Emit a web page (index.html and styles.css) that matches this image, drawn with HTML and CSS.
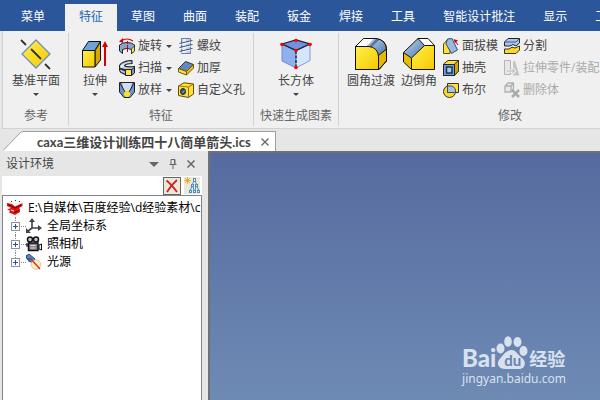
FILE: index.html
```html
<!DOCTYPE html>
<html lang="zh-CN">
<head>
  <meta charset="UTF-8">
  <title>CAXA 3D</title>
  <meta name="viewport" content="width=device-width, initial-scale=1.0">
  <link rel="stylesheet" href="styles.css">
</head>
<body>
  <svg class="defs" width="0" height="0" aria-hidden="true">
    <defs>
      <linearGradient id="gold" x1="0" y1="0" x2="1" y2="1">
        <stop offset="0" stop-color="#fff04a"/>
        <stop offset="1" stop-color="#f5c800"/>
      </linearGradient>
      <linearGradient id="steel" x1="0" y1="0" x2="1" y2="1">
        <stop offset="0" stop-color="#c3d9f0"/>
        <stop offset="1" stop-color="#4a76ab"/>
      </linearGradient>
    </defs>
  </svg>

  <!-- Menu -->
  <nav class="menu">
    <button class="menu-tab first">菜单</button>
    <button class="menu-tab active">特征</button>
    <button class="menu-tab">草图</button>
    <button class="menu-tab">曲面</button>
    <button class="menu-tab">装配</button>
    <button class="menu-tab">钣金</button>
    <button class="menu-tab">焊接</button>
    <button class="menu-tab">工具</button>
    <button class="menu-tab">智能设计批注</button>
    <button class="menu-tab">显示</button>
    <button class="menu-tab">工程</button>
  </nav>

  <!-- Ribbon -->
  <div class="ribbon">
    <section class="group">
      <div class="group-body">
        <button class="big">
          <svg width="32" height="32" viewBox="0 0 32 32">
            <path d="M16 2L30 16L16 30L2 16Z" fill="url(#gold)" stroke="#6f8fc4" stroke-width="1.3"/>
            <path d="M1 2L6 7M11 11L21 21M25 26L30 31" stroke="#333" stroke-width="1.8"/>
          </svg>
          <span>基准平面</span>
          <i class="arrow"></i>
        </button>
      </div>
      <div class="group-name">参考</div>
    </section>

    <section class="group">
      <div class="group-body">
        <button class="big">
          <svg width="32" height="32" viewBox="0 0 32 32">
            <path d="M3.5 12.5L9.5 3.5H21.5L16 12.5Z" fill="#6fa3d8" stroke="#111"/>
            <path d="M16 12.5L21.5 3.5V22L16 29Z" fill="#d9a800" stroke="#111"/>
            <path d="M3.5 12.5H16V29H3.5Z" fill="url(#gold)" stroke="#111"/>
            <path d="M26 28V8" stroke="#d40000" stroke-width="2"/>
            <path d="M23 9L26 3L29 9Z" fill="#d40000"/>
          </svg>
          <span>拉伸</span>
          <i class="arrow"></i>
        </button>
        <div class="column">
          <button class="small">
            <svg width="16" height="16" viewBox="0 0 16 16">
              <path d="M.5 7Q3 4.500 8 4.500T15.500 7V13L12.500 15.500V11.500Q8 9 3.500 11.500V15.500L.5 13Z" fill="#86a6cf" stroke="#222"/>
              <path d="M12.500 11L15.500 8V13L12.500 15.500Z" fill="#ffe34a" stroke="#222" stroke-width=".7"/>
              <path d="M2 3Q8-1 14 3" fill="none" stroke="#d40000" stroke-width="1.200"/>
              <path d="M8.500 3V15" stroke="#d40000" stroke-dasharray="3 1"/>
              <path d="M0 3.500L4 0V5Z" fill="#d40000"/>
            </svg>
            <span>旋转</span><i class="arrow"></i>
          </button>
          <button class="small">
            <svg width="16" height="16" viewBox="0 0 16 16">
              <path d="M13 .5Q3 1 .5 5.500Q0 9 4 10L6.500 11V14.500L2 12.500Q0 11 .5 6M13 .5V3.500Q7 3.500 5.500 5.500Q7 7.500 15.500 6.500V9L12.500 10H6.500L2 8.500" fill="#b7cbe5" stroke="#222" stroke-width="1.200"/>
              <path d="M6.500 9.500H12.500V15.500H6.500Z" fill="#ffe34a" stroke="#222"/>
              <path d="M12.500 9.500L15.500 7.500V13L12.500 15.500Z" fill="#7597c5" stroke="#222"/>
            </svg>
            <span>扫描</span><i class="arrow"></i>
          </button>
          <button class="small">
            <svg width="16" height="16" viewBox="0 0 16 16">
              <path d="M.5 .5H15.500V10L11 15.500H5L.5 10Z" fill="#6f94c4" stroke="#222"/>
              <path d="M3 1H13L11 9H5Z" fill="#cfdff0"/>
              <path d="M1 1L6 10M15 1L10 10" stroke="#222"/>
              <circle cx="8" cy="12" r="3" fill="#ffe21f"/>
            </svg>
            <span>放样</span><i class="arrow"></i>
          </button>
        </div>
        <div class="column">
          <button class="small">
            <svg width="16" height="16" viewBox="0 0 16 16">
              <path d="M3.500 .5H12.500V15.500H3.500Z" fill="#bccfe9" stroke="#6b83ab"/>
              <path d="M5 1H8V15H5Z" fill="#e6eefa"/>
              <path d="M1.500 5.500L14.500 2.500M1.500 9.500L14.500 6.500M1.500 13.500L14.500 10.500" stroke="#4f5b6b" stroke-width="1.200"/>
              <path d="M3 6.500L13 4M3 10.500L13 8M3 14.500L13 12" stroke="#fff" stroke-width=".8"/>
            </svg>
            <span>螺纹</span>
          </button>
          <button class="small">
            <svg width="16" height="16" viewBox="0 0 16 16">
              <path d="M.5 8.500L7.500 1.500L15.500 4.500L8.500 11.500Z" fill="#6288bd" stroke="#333"/>
              <path d="M.5 8.500L8.500 11.500V15L.5 12Z" fill="#ffe13a" stroke="#6d5b00"/>
              <path d="M8.500 11.500L15.500 4.500V8L8.500 15Z" fill="#f0c400" stroke="#6d5b00"/>
            </svg>
            <span>加厚</span>
          </button>
          <button class="small">
            <svg width="16" height="16" viewBox="0 0 16 16">
              <path d="M.5 4L6 .8L15.500 2V12L10.500 15.500L.5 13.500Z" fill="#ffe13a" stroke="#5c4d00"/>
              <path d="M.5 4L10.500 5L15.500 2M10.500 5V15.500" fill="none" stroke="#927900"/>
              <ellipse cx="5" cy="9.500" rx="2.500" ry="3" fill="#35547f" stroke="#222"/>
              <path d="M4 11A2.500 2.500 0 0 0 6.500 8Z" fill="#a8c2e3"/>
            </svg>
            <span>自定义孔</span>
          </button>
        </div>
      </div>
      <div class="group-name">特征</div>
    </section>

    <section class="group shape-group">
      <div class="group-body">
        <button class="big">
          <svg width="32" height="32" viewBox="0 0 32 32">
            <path d="M2 6L16 2L30 6L16 12.500Z" fill="#6f93e0" stroke="#222" stroke-width="1.300"/>
            <path d="M2 6L16 12.500V30L2 23Z" fill="#8fb0ee" stroke="#6f8fd6"/>
            <path d="M30 6L16 12.500V30L30 22.500Z" fill="#d5e6fc" stroke="#7c9bdc"/>
            <path d="M2 6L16 12.500L30 6" fill="none" stroke="#222" stroke-width="1.300"/>
            <path d="M16 13V29" stroke="#111" stroke-width="1.300" stroke-dasharray="3 1.500"/>
            <g fill="#f00">
              <circle cx="16" cy="2.500" r="1.800"/>
              <circle cx="2" cy="6.500" r="1.800"/>
              <circle cx="30" cy="6.500" r="1.800"/>
              <circle cx="16" cy="12.500" r="1.800"/>
              <circle cx="16" cy="29.500" r="1.800"/>
            </g>
          </svg>
          <span>长方体</span>
          <i class="arrow"></i>
        </button>
      </div>
      <div class="group-name">快速生成图素</div>
    </section>

    <section class="group edit-group">
      <div class="group-body">
        <button class="big">
          <svg width="32" height="32" viewBox="0 0 32 32">
            <path d="M.5 8.500L8.500 .5H21Q31.500 2 31.500 12V23L24 31.500H.5Z" fill="#e5b900" stroke="#111"/>
            <path d="M.5 8.500L8.500 .5H19L11.500 8.500Z" fill="#fff"/>
            <path d="M11.500 8.500L19 .5Q31 1 31 12L23.500 17Q22 8.500 11.500 8.500Z" fill="url(#steel)"/>
            <path d="M14 8.500L21 1L24 2L17 9Z" fill="#4c78ad"/>
            <path d="M.5 8.500H14Q22.500 9.500 23.500 18V31.500H.5Z" fill="url(#gold)"/>
            <path d="M.5 8.500H14Q22.500 9.500 23.500 18V31.500M23.500 17.500L31.500 11" fill="none" stroke="#111"/>
            <path d="M.5 8.500L8.500 .5H21Q31.500 2 31.500 12V23L24 31.500H.5Z" fill="none" stroke="#111"/>
          </svg>
          <span>圆角过渡</span>
        </button>
        <button class="big">
          <svg width="32" height="32" viewBox="0 0 32 32">
            <path d="M15 .5H25L31.500 7.500H21Z" fill="#fff"/>
            <path d="M.5 14.500L8.500 20V31.500L.5 24Z" fill="#e8bd00"/>
            <path d="M.5 14.500L15 .5L21.500 7.500L8.500 20Z" fill="url(#steel)"/>
            <path d="M8.500 20L21.500 7.500H31.500V31.500H8.500Z" fill="url(#gold)"/>
            <path d="M.5 14.500L15 .5H25L31.500 7.500V31.500H8.500L.5 24ZM.5 14.500L8.500 20V31M8.500 20L21.500 7.500H31.500M15 .5L21.500 7.500" fill="none" stroke="#111"/>
          </svg>
          <span>边倒角</span>
        </button>
        <div class="column">
          <button class="small">
            <svg width="16" height="16" viewBox="0 0 16 16">
              <path d="M.5 6L5 1L7 2V15.500H.5Z" fill="#ffe13a" stroke="#5c4d00"/>
              <path d="M4.500 1L9 .5L14.500 12L8.500 15.500L3 6Z" fill="#9bb8df" stroke="#34507b"/>
              <path d="M15 7L12 3" stroke="#c00"/>
              <path d="M10.500 1L15 2.500L12 5Z" fill="#c00"/>
            </svg>
            <span>面拔模</span>
          </button>
          <button class="small">
            <svg width="16" height="16" viewBox="0 0 16 16">
              <path d="M.5 4L5 .5H15.500V11L11.500 15.500H.5Z" fill="#ffe13a" stroke="#333"/>
              <path d="M11.500 4L15.500 .5V11L11.500 15.500Z" fill="#d3a500" stroke="#333"/>
              <path d="M.5 4.500H11.500V15.500H.5Z" fill="#6fa0d6" stroke="#222"/>
              <path d="M3.500 7H9V13H3.500Z" fill="#a9c9ec" stroke="#1b3353" stroke-width="1.500"/>
            </svg>
            <span>抽壳</span>
          </button>
          <button class="small">
            <svg width="16" height="16" viewBox="0 0 16 16">
              <circle cx="6.500" cy="9.500" r="6" fill="#ffd91f" stroke="#333"/>
              <path d="M4.500 1.500H15.500V10.500H4.500Z" fill="#ffe13a" stroke="#333"/>
              <path d="M4.500 4H8.500Q13 5 12.500 10.500H4.500Z" fill="#a7c1ea" stroke="#34507b"/>
            </svg>
            <span>布尔</span>
          </button>
        </div>
        <div class="column">
          <button class="small">
            <svg width="16" height="16" viewBox="0 0 16 16">
              <path d="M.5 4L4 .5H15.500V5L12 8Q9 5 6 8H.5Z" fill="#a9c5ee" stroke="#222"/>
              <path d="M.5 4H12L15.500 .5" fill="none" stroke="#445c85"/>
              <path d="M.5 11H5Q8 8 11 10L15.500 8V12L12 15.500H.5Z" fill="#ffd91f" stroke="#333"/>
            </svg>
            <span>分割</span>
          </button>
          <button class="small" disabled>
            <svg width="16" height="16" viewBox="0 0 16 16">
              <path d="M.5 .5H6.500V14.500H.5Z" fill="#e6e6e6" stroke="#b5b5b5"/>
              <path d="M9 1H11L15.500 15.500H9Z" fill="#c4c4c4"/>
              <path d="M3 11H10M8 8.500L10.500 11L8 13.500" fill="none" stroke="#fff" stroke-width="2.500"/>
              <path d="M3 11H10M8 8.500L10.500 11L8 13.500" fill="none" stroke="#a5a5a5"/>
            </svg>
            <span>拉伸零件/装配</span>
          </button>
          <button class="small" disabled>
            <svg width="16" height="16" viewBox="0 0 16 16">
              <path d="M1 4L4 1H9.500V7L7 10H1ZM1 4H7V10M7 4L9.500 1" fill="#e9e9e9" stroke="#b0b0b0" stroke-width="1.300"/>
              <path d="M8 8L15 15M15 8L8 15" stroke="#aaa" stroke-width="2.500"/>
            </svg>
            <span>删除体</span>
          </button>
        </div>
      </div>
      <div class="group-name">修改</div>
    </section>
  </div>

  <!-- Document tabs -->
  <div class="doc-bar">
    <svg class="slope" width="20" height="20" viewBox="0 0 20 20">
      <path d="M0 20L17 2Q18.500 .5 20 .5V20Z" fill="#fff"/>
      <path d="M0 19.500L17 2Q18.500 .5 20 .5" fill="none" stroke="#a0a0a0"/>
    </svg>
    <div class="doc-tab">
      <span>caxa三维设计训练四十八简单箭头.ics</span>
      <button class="icon-btn" aria-label="关闭文档">
        <svg width="8" height="8" viewBox="0 0 8 8"><path d="M.5 .5L7.500 7.500M7.500 .5L.5 7.500" stroke="#666" stroke-width="1.300"/></svg>
      </button>
    </div>
  </div>

  <main class="work">
    <aside class="panel">
      <div class="panel-head">
        <span class="panel-title">设计环境</span>
        <button class="icon-btn" aria-label="选项">
          <svg width="10" height="10" viewBox="0 0 10 10"><path d="M0 3H10L5 8Z" fill="#666"/></svg>
        </button>
        <button class="icon-btn" aria-label="固定">
          <svg width="8" height="10" viewBox="0 0 8 10"><path d="M2 5.500V.5H6V5.500M5.500 .5V5.500M.5 5.500H7.500M4 5.500V10" fill="none" stroke="#666"/></svg>
        </button>
        <button class="icon-btn" aria-label="关闭">
          <svg width="8" height="8" viewBox="0 0 8 8"><path d="M.5 .5L7.500 7.500M7.500 .5L.5 7.500" stroke="#666" stroke-width="1.500"/></svg>
        </button>
      </div>

      <div class="filter">
        <input class="filter-input" type="text" aria-label="搜索">
        <button class="filter-btn clear" aria-label="清除">
          <svg width="14" height="14" viewBox="0 0 14 14"><path d="M1.500 1.500Q6 5 12 13M12 1Q6 6 2 13" fill="none" stroke="#d32028" stroke-width="1.800"/></svg>
        </button>
        <button class="filter-btn" aria-label="结构">
          <svg width="16" height="17" viewBox="0 0 16 17">
            <path d="M3.500 0V7M0 3.500H7M1 1L6 6M6 1L1 6" stroke="#e0a21c" stroke-width=".8"/>
            <path d="M10 4L8 8M11 4L13 8M8 9L6 14M9 9L10 14M12 9L11 14M13 9L15 14" stroke="#4a8fc0"/>
            <g fill="#f5faff" stroke="#4a8fc0">
              <rect x="9.500" y="1.500" width="2" height="3"/>
              <rect x="7.500" y="7.500" width="2" height="2"/>
              <rect x="11.500" y="7.500" width="2" height="2"/>
              <rect x="5.500" y="13.500" width="2" height="2"/>
              <rect x="9.500" y="13.500" width="2" height="2"/>
              <rect x="13.500" y="13.500" width="2" height="2"/>
            </g>
          </svg>
        </button>
      </div>

      <ul class="tree">
        <li class="node root">
          <svg width="16" height="16" viewBox="0 0 16 16">
            <path d="M0 3L5 4L8 6.500L15.500 3V6L12 8L13 9V12L8 15L2 12.500L3 10.500L0 9.500L4 8L0 6Z" fill="#e60f0f"/>
            <path d="M1 4.500L5 6.500L8 8L14 5M7 12.500L12 10.500" fill="none" stroke="#5a0000"/>
            <path d="M4 9.500L7 10.500V11.500L4 10.500Z" fill="#fff"/>
            <path d="M4 1.500H5M8 .5H9M12 1.500H13" stroke="#333"/>
          </svg>
          <span>E:\自媒体\百度经验\d经验素材\c</span>
        </li>
        <li class="node child">
          <button class="expand" aria-label="展开"><svg width="7" height="7" viewBox="0 0 7 7"><path d="M1 3.500H6M3.500 1V6" stroke="#2b4fa8"/></svg></button>
          <svg width="16" height="16" viewBox="0 0 16 16">
            <path d="M6 3V10H13M6 10L2 13" fill="none" stroke="#444" stroke-width="1.600"/>
            <path d="M3 4L6 0L9 4ZM12 7L16 10L12 13ZM0 10V15H5Z" fill="#444"/>
          </svg>
          <span>全局坐标系</span>
        </li>
        <li class="node child">
          <button class="expand" aria-label="展开"><svg width="7" height="7" viewBox="0 0 7 7"><path d="M1 3.500H6M3.500 1V6" stroke="#2b4fa8"/></svg></button>
          <svg width="16" height="16" viewBox="0 0 16 16">
            <circle cx="4" cy="3.500" r="2.500" fill="#ccc" stroke="#111" stroke-width="1.500"/>
            <circle cx="10" cy="3.500" r="2.500" fill="#ccc" stroke="#111" stroke-width="1.500"/>
            <path d="M2.500 7H12V14.500H2.500Z" fill="#8c7f90" stroke="#111" stroke-width="1.500"/>
            <path d="M13 9L15.500 8V14L13 13ZM0 8H2V10H0Z" fill="#eee" stroke="#111"/>
            <path d="M4.500 9.500H9.500M4.500 12H9.500" stroke="#ddd"/>
          </svg>
          <span>照相机</span>
        </li>
        <li class="node child last">
          <button class="expand" aria-label="展开"><svg width="7" height="7" viewBox="0 0 7 7"><path d="M1 3.500H6M3.500 1V6" stroke="#2b4fa8"/></svg></button>
          <svg width="16" height="16" viewBox="0 0 16 16">
            <path d="M0 2L3 0L9 5L6 9L1 5Z" fill="#4f86c4" stroke="#27466f"/>
            <path d="M3 4V8" stroke="#27466f"/>
            <circle cx="10" cy="10.500" r="4.800" fill="#f7edbd" stroke="#c8bc90" stroke-width=".7"/>
            <path d="M4 4L14 15" stroke="#e02020" stroke-width="1.200"/>
          </svg>
          <span>光源</span>
        </li>
      </ul>
    </aside>

    <div class="viewport">
      <div class="watermark">
        <div class="brand">
          <span class="brand-latin">Bai</span>
          <span class="paw">
            <svg width="32" height="34" viewBox="0 0 32 34">
              <g fill="#d9e1ee">
                <ellipse cx="4.500" cy="12.500" rx="4" ry="5"/>
                <ellipse cx="12" cy="5.500" rx="3.800" ry="5.300"/>
                <ellipse cx="21.500" cy="6" rx="4" ry="5"/>
                <ellipse cx="27.500" cy="15" rx="4" ry="5"/>
                <path d="M15.500 14C20 14 22 19 26 22C31 26 29 33 23 33H9C3 33 0 28 3 24C6 20 10 14 15.500 14Z"/>
              </g>
            </svg>
            <span class="paw-text">du</span>
          </span>
          <span class="brand-cn">经验</span>
        </div>
        <div class="site">jingyan.baidu.com</div>
      </div>
    </div>
  </main>
</body>
</html>
```

FILE: styles.css
```css
* {
  box-sizing: border-box;
}

body {
  display: flex;
  flex-direction: column;
  min-height: 100vh;
  margin: 0;
  background: #e6e6e6;
  color: #444;
  font-family: "Open Sans", "Noto Sans CJK SC", sans-serif;
  font-size: 12px;
  line-height: 16px;
}

button {
  padding: 0;
  border: 0;
  background: none;
  color: inherit;
  font: inherit;
  white-space: nowrap;
  cursor: pointer;
}

svg {
  display: block;
  flex: none;
}

.defs {
  position: absolute;
}

/* menu */
.menu {
  display: flex;
  height: 31px;
  padding-top: 4px;
  background: #2b579a;
  color: #fff;
  overflow: hidden;
}

.menu-tab {
  flex: none;
  padding: 0 14px 2px;
}

.menu-tab.first {
  padding: 0 20px 2px 21px;
}

.menu-tab.active {
  background: #f0f0f0;
  color: #1e62b4;
}

/* ribbon */
.ribbon {
  display: flex;
  margin-left: 2px;
  padding-left: 1px;
  border-left: 1px solid #d2d2d2;
  border-bottom: 1px solid #d2d2d2;
  background: #f0f0f0;
  overflow: hidden;
}

.group {
  display: flex;
  flex: none;
  flex-direction: column;
  justify-content: space-between;
  margin: 2px 0;
  padding: 2px 8px;
  border-right: 1px solid #d2d2d2;
}

.shape-group {
  padding: 2px 6px;
}

.edit-group {
  min-width: 343px;
}

.group-body {
  display: flex;
  gap: 6px;
}

.shape-group .group-body {
  justify-content: center;
}

.group-name {
  margin-top: 7px;
  color: #666;
  text-align: center;
}

.big {
  display: flex;
  flex-direction: column;
  align-items: center;
  gap: 3px;
  min-width: 36px;
  padding-top: 3px;
}

.big .arrow {
  margin-top: 1px;
}

.column {
  display: flex;
  flex-direction: column;
}

.small {
  display: flex;
  align-items: center;
  gap: 3px;
  height: 22px;
}

.small .arrow {
  margin-left: 1px;
}

.small:disabled {
  color: #aaa;
}

.arrow {
  border: 3px solid transparent;
  border-top-color: #444;
  border-bottom: 0;
}

/* document tabs */
.doc-bar {
  display: flex;
  padding: 2px 0 0 3px;
}

.doc-tab {
  display: flex;
  align-items: center;
  gap: 10px;
  height: 20px;
  padding: 0 6px 0 14px;
  border-top: 1px solid #a0a0a0;
  border-right: 1px solid #a0a0a0;
  background: #fff;
  font-family: Lato, "Noto Sans CJK SC", sans-serif;
  font-size: 13px;
  font-weight: bold;
}

/* work area */
.work {
  display: flex;
  flex: 1;
}

.panel {
  display: flex;
  flex: none;
  flex-direction: column;
  width: 202px;
  padding-left: 2px;
}

.panel-head {
  display: flex;
  align-items: center;
  gap: 10px;
  height: 25px;
  padding: 0 7px 0 4px;
}

.panel-title {
  flex: 1;
}

.filter {
  display: flex;
  gap: 3px;
  align-items: center;
  height: 19px;
  padding-right: 2px;
  background: #fff;
}

.filter-input {
  flex: 1;
  min-width: 0;
  border: 0;
  outline: 0;
  background: #fff;
}

.filter-btn {
  display: grid;
  place-items: center;
  background: #ece9d8;
}

.filter-btn.clear {
  width: 18px;
  height: 18px;
  border: 1px solid #666;
}

.tree {
  flex: 1;
  margin: 0;
  padding: 3px 0 0;
  border: 1px solid #7f858f;
  border-bottom: 0;
  background: #fff;
  color: #000;
  list-style: none;
}

.node {
  position: relative;
  display: flex;
  align-items: center;
  gap: 5px;
  height: 18px;
  padding-left: 8px;
  white-space: nowrap;
}

.node.root {
  padding-left: 4px;
  overflow: hidden;
}

/* dotted tree lines */
.child::before {
  content: "";
  position: absolute;
  left: 12px;
  top: 0;
  bottom: 0;
  border-left: 1px dotted #888;
}

.child.last::before {
  bottom: 50%;
}

.child::after {
  content: "";
  position: absolute;
  left: 18px;
  top: 9px;
  width: 5px;
  border-top: 1px dotted #888;
}

.expand {
  position: relative;
  display: grid;
  place-items: center;
  width: 9px;
  height: 9px;
  margin-right: 1px;
  border: 1px solid #919191;
  background: #fff;
}

/* 3d view */
.viewport {
  display: flex;
  flex: 1;
  align-items: flex-end;
  justify-content: flex-end;
  margin-left: 6px;
  padding: 0 34px 13px 0;
  border-top: 2px solid #6f7276;
  border-left: 2px solid #6f7276;
  background: linear-gradient(#566a9f, #6e8bb4);
}

.watermark {
  color: #d9e1ee;
}

.brand {
  display: flex;
  align-items: flex-end;
  margin-bottom: 1px;
}

.brand-latin {
  font-family: Lato, sans-serif;
  font-size: 24px;
  font-weight: 900;
  line-height: 24px;
}

.paw {
  position: relative;
}

.paw-text {
  position: absolute;
  left: 8px;
  bottom: 2px;
  color: #6480ae;
  font-family: Lato, sans-serif;
  font-size: 15px;
  font-weight: bold;
}

.brand-cn {
  margin-left: 1px;
  font-size: 18px;
  font-weight: bold;
  line-height: 22px;
}

.site {
  font-family: "Noto Sans", sans-serif;
  font-size: 12px;
}
```
